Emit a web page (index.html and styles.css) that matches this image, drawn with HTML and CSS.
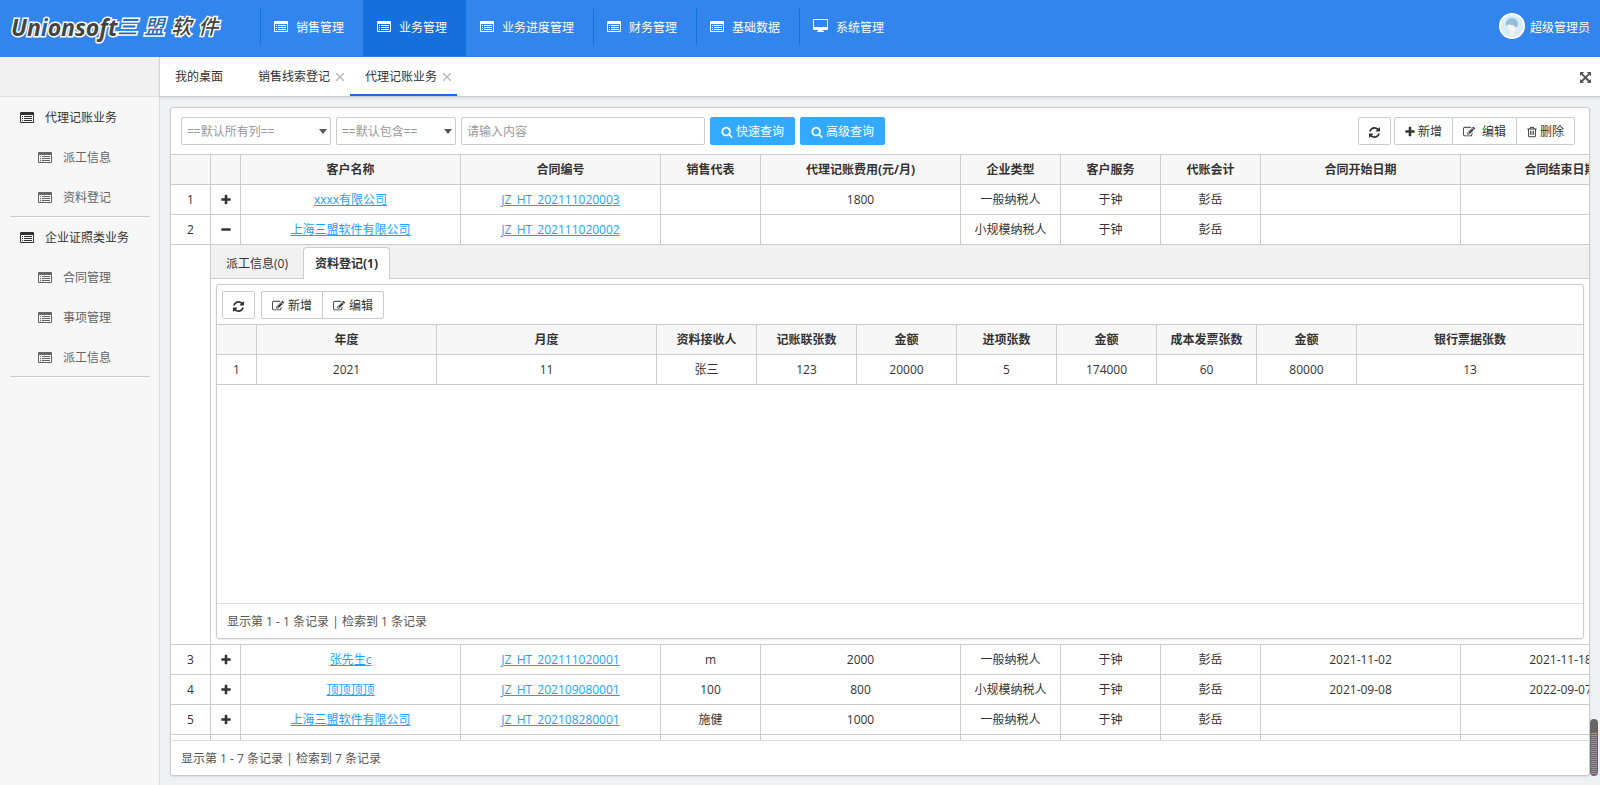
FILE: index.html
```html
<!DOCTYPE html>
<html lang="zh-CN">
<head>
    <meta charset="UTF-8">
    <meta name="viewport" content="width=device-width, initial-scale=1.0">
    <title>代理记账业务</title>
    <link rel="stylesheet" href="styles.css">
</head>
<body>
    <!-- icon sprite -->
    <svg class="sprite" aria-hidden="true">
        <symbol id="i-list" viewBox="0 0 14 12">
            <path fill-rule="evenodd" d="M1 1h12a1 1 0 0 1 1 1v9a1 1 0 0 1-1 1H1a1 1 0 0 1-1-1V2a1 1 0 0 1 1-1zM1 4v7h12V4z"/>
            <path d="M2 5h1v1H2zM4 5h8v1H4zM2 7h1v1H2zM4 7h8v1H4zM2 9h1v1H2zM4 9h8v1H4z"/>
        </symbol>
        <symbol id="i-desktop" viewBox="0 0 15 14">
            <path fill-rule="evenodd" d="M1 0h13a1 1 0 0 1 1 1v9a1 1 0 0 1-1 1h-4v1h1v1H4v-1h1v-1H1a1 1 0 0 1-1-1V1a1 1 0 0 1 1-1zM1 1v7h13V1z"/>
        </symbol>
        <symbol id="i-refresh" viewBox="0 0 1536 1792">
            <path d="M1511 1056q0 5-1 7-64 268-268 434.500t-478 166.500q-146 0-282.500-55t-243.500-157l-129 129q-19 19-45 19t-45-19-19-45v-448q0-26 19-45t45-19h448q26 0 45 19t19 45-19 45l-137 137q71 66 161 102t187 36q134 0 250-65t186-179q11-17 53-117 8-23 30-23h192q13 0 22.500 9.500t9.500 22.500zm25-800v448q0 26-19 45t-45 19h-448q-26 0-45-19t-19-45 19-45l138-138q-148-137-349-137-134 0-250 65t-186 179q-11 17-53 117-8 23-30 23h-199q-13 0-22.500-9.500t-9.500-22.500v-7q65-268 270-434.500t480-166.500q146 0 284 55.500t245 156.500l130-129q19-19 45-19t45 19 19 45z"/>
        </symbol>
        <symbol id="i-plus" viewBox="0 0 1408 1792">
            <path d="M1408 736v192q0 40-28 68t-68 28h-416v416q0 40-28 68t-68 28h-192q-40 0-68-28t-28-68v-416h-416q-40 0-68-28t-28-68v-192q0-40 28-68t68-28h416v-416q0-40 28-68t68-28h192q40 0 68 28t28 68v416h416q40 0 68 28t28 68z"/>
        </symbol>
        <symbol id="i-minus" viewBox="0 0 1408 1792">
            <path d="M1408 736v192q0 40-28 68t-68 28h-1216q-40 0-68-28t-28-68v-192q0-40 28-68t68-28h1216q40 0 68 28t28 68z"/>
        </symbol>
        <symbol id="i-search" viewBox="0 0 1664 1792">
            <path d="M1152 832q0-185-131.500-316.500t-316.500-131.500-316.500 131.500-131.500 316.500 131.500 316.500 316.500 131.500 316.500-131.500 131.500-316.500zm512 832q0 52-38 90t-90 38q-54 0-90-38l-343-342q-179 124-399 124-143 0-273.500-55.500t-225-150-150-225-55.500-273.500 55.500-273.500 150-225 225-150 273.500-55.500 273.500 55.500 225 150 150 225 55.500 273.500q0 220-124 399l343 343q37 37 37 90z"/>
        </symbol>
        <symbol id="i-edit" viewBox="0 0 1792 1792">
            <path d="M888 1184l116-116-152-152-116 116v56h96v96h56zm440-720q-16-16-33 1l-350 350q-17 17-1 33t33-1l350-350q17-17 1-33zm80 594v190q0 119-84.500 203.500t-203.500 84.500h-832q-119 0-203.500-84.500t-84.500-203.500v-832q0-119 84.500-203.500t203.500-84.500h832q63 0 117 25 15 7 18 23 3 17-9 29l-49 49q-14 14-32 8-23-6-45-6h-832q-66 0-113 47t-47 113v832q0 66 47 113t113 47h832q66 0 113-47t47-113v-126q0-13 9-22l64-64q15-15 35-7t20 29zm-96-738l288 288-672 672h-288v-288zm444 132l-92 92-288-288 92-92q28-28 68-28t68 28l152 152q28 28 28 68t-28 68z"/>
        </symbol>
        <symbol id="i-trash" viewBox="0 0 1408 1792">
            <path d="M512 736v576q0 14-9 23t-23 9h-64q-14 0-23-9t-9-23v-576q0-14 9-23t23-9h64q14 0 23 9t9 23zm256 0v576q0 14-9 23t-23 9h-64q-14 0-23-9t-9-23v-576q0-14 9-23t23-9h64q14 0 23 9t9 23zm256 0v576q0 14-9 23t-23 9h-64q-14 0-23-9t-9-23v-576q0-14 9-23t23-9h64q14 0 23 9t9 23zm128 724v-948h-896v948q0 22 7 40.500t14.500 27 10.500 8.500h832q3 0 10.500-8.500t14.500-27 7-40.500zm-672-1076h448l-48-117q-7-9-17-11h-317q-10 2-17 11zm928 32v64q0 14-9 23t-23 9h-96v948q0 83-47 143.500t-113 60.500h-832q-66 0-113-58.500t-47-141.500v-952h-96q-14 0-23-9t-9-23v-64q0-14 9-23t23-9h309l70-167q15-37 54-63t79-26h320q40 0 79 26t54 63l70 167h309q14 0 23 9t9 23z"/>
        </symbol>
        <symbol id="i-expand" viewBox="0 0 12 12">
            <path d="M0 0h4.500L3 1.500 6 4.500l3-3L7.500 0H12v4.500L10.500 3l-3 3 3 3L12 7.500V12H7.500L9 10.500l-3-3-3 3L4.500 12H0V7.500L1.500 9l3-3-3-3L0 4.500z"/>
        </symbol>
        <symbol id="i-close" viewBox="0 0 8 8">
            <path d="M0 0l8 8M8 0L0 8" fill="none" stroke="currentColor" stroke-width="1.500"/>
        </symbol>
    </svg>

    <header class="header">
        <a class="logo" href="#" aria-label="Unionsoft 三盟软件">
            <span class="logo-en">Un<i>i</i>onsoft</span>
            <span class="logo-cn"><b>三</b><b>盟</b><span>软</span><span>件</span></span>
        </a>
        <nav class="nav">
            <a href="#"><svg class="ic-list"><use href="#i-list"/></svg>销售管理</a>
            <a href="#" class="active"><svg class="ic-list"><use href="#i-list"/></svg>业务管理</a>
            <a href="#"><svg class="ic-list"><use href="#i-list"/></svg>业务进度管理</a>
            <a href="#"><svg class="ic-list"><use href="#i-list"/></svg>财务管理</a>
            <a href="#"><svg class="ic-list"><use href="#i-list"/></svg>基础数据</a>
            <a href="#"><svg class="ic-desktop"><use href="#i-desktop"/></svg>系统管理</a>
        </nav>
        <a class="user" href="#">
            <svg class="avatar" viewBox="0 0 26 26">
                <circle cx="13" cy="13" r="13" fill="#fff"/>
                <circle cx="13" cy="13" r="11" fill="#d9ecfa"/>
                <path d="M9 12c0-1 8-1 9 0 0 3-1 5-3 6v3c0 2-3 2-3 0v-3c-2-1-3-3-3-6z" fill="#fdf3ec"/>
                <path d="M7 13c-1-5 2-8 6-8 4 0 6 3 6 6 0 2-1 3-2 4-1-2-3-3-5-3-2-1-3 0-5 1z" fill="#94bfdb"/>
            </svg>
            <span>超级管理员</span>
        </a>
    </header>

    <div class="main">
        <aside class="sidebar">
            <div class="sidebar-top"></div>
            <nav class="menu">
                <div class="menu-group">
                    <a class="menu-title" href="#"><svg class="ic-list"><use href="#i-list"/></svg>代理记账业务</a>
                    <a href="#"><svg class="ic-list"><use href="#i-list"/></svg>派工信息</a>
                    <a href="#"><svg class="ic-list"><use href="#i-list"/></svg>资料登记</a>
                </div>
                <div class="menu-group">
                    <a class="menu-title" href="#"><svg class="ic-list"><use href="#i-list"/></svg>企业证照类业务</a>
                    <a href="#"><svg class="ic-list"><use href="#i-list"/></svg>合同管理</a>
                    <a href="#"><svg class="ic-list"><use href="#i-list"/></svg>事项管理</a>
                    <a href="#"><svg class="ic-list"><use href="#i-list"/></svg>派工信息</a>
                </div>
            </nav>
        </aside>

        <section class="content">
            <div class="tabs">
                <a class="tab tab-home" href="#">我的桌面</a>
                <a class="tab" href="#">销售线索登记<svg class="ic-close"><use href="#i-close"/></svg></a>
                <a class="tab active" href="#">代理记账业务<svg class="ic-close"><use href="#i-close"/></svg></a>
                <button class="full" type="button" aria-label="全屏"><svg class="ic-expand"><use href="#i-expand"/></svg></button>
            </div>

            <div class="panel">
                <form class="toolbar">
                    <span class="select select-col"><select aria-label="查询列"><option>==默认所有列==</option></select></span>
                    <span class="select select-op"><select aria-label="查询条件"><option>==默认包含==</option></select></span>
                    <input class="keyword" type="text" placeholder="请输入内容" aria-label="查询内容">
                    <button class="btn-primary" type="button"><svg class="ic-search"><use href="#i-search"/></svg>快速查询</button>
                    <button class="btn-primary" type="button"><svg class="ic-search"><use href="#i-search"/></svg>高级查询</button>
                    <div class="tools">
                        <button class="btn" type="button" aria-label="刷新"><svg class="ic-refresh"><use href="#i-refresh"/></svg></button>
                        <div class="btn-group">
                            <button class="btn" type="button"><svg class="ic-plus"><use href="#i-plus"/></svg>新增</button>
                            <button class="btn btn-wide" type="button"><svg class="ic-edit"><use href="#i-edit"/></svg>编辑</button>
                            <button class="btn" type="button"><svg class="ic-trash"><use href="#i-trash"/></svg>删除</button>
                        </div>
                    </div>
                </form>

                <div class="grid-wrap">
                    <table class="grid grid-main">
                        <colgroup>
                            <col class="w40"><col class="w30"><col class="w220"><col class="w200"><col class="w100"><col class="w200">
                            <col class="w100"><col class="w100"><col class="w100"><col class="w200"><col class="w200">
                        </colgroup>
                        <thead>
                            <tr>
                                <th></th><th></th><th>客户名称</th><th>合同编号</th><th>销售代表</th><th>代理记账费用(元/月)</th>
                                <th>企业类型</th><th>客户服务</th><th>代账会计</th><th>合同开始日期</th><th>合同结束日期</th>
                            </tr>
                        </thead>
                        <tbody>
                            <tr>
                                <td>1</td>
                                <td><button class="toggle" type="button" aria-label="展开"><svg class="ic-plus"><use href="#i-plus"/></svg></button></td>
                                <td><a href="#">xxxx有限公司</a></td>
                                <td><a href="#">JZ_HT_202111020003</a></td>
                                <td></td><td>1800</td><td>一般纳税人</td><td>于钟</td><td>彭岳</td><td></td><td></td>
                            </tr>
                            <tr>
                                <td>2</td>
                                <td><button class="toggle" type="button" aria-label="收起"><svg class="ic-plus"><use href="#i-minus"/></svg></button></td>
                                <td><a href="#">上海三盟软件有限公司</a></td>
                                <td><a href="#">JZ_HT_202111020002</a></td>
                                <td></td><td></td><td>小规模纳税人</td><td>于钟</td><td>彭岳</td><td></td><td></td>
                            </tr>
                            <tr class="detail-row">
                                <td></td>
                                <td colspan="10">
                                    <div class="detail">
                                        <div class="subtabs">
                                            <a href="#">派工信息(0)</a>
                                            <a class="active" href="#">资料登记(1)</a>
                                        </div>
                                        <div class="subpanel">
                                            <div class="subtools">
                                                <button class="btn" type="button" aria-label="刷新"><svg class="ic-refresh"><use href="#i-refresh"/></svg></button>
                                                <div class="btn-group">
                                                    <button class="btn" type="button"><svg class="ic-edit"><use href="#i-edit"/></svg>新增</button>
                                                    <button class="btn" type="button"><svg class="ic-edit"><use href="#i-edit"/></svg>编辑</button>
                                                </div>
                                            </div>
                                            <table class="grid grid-sub">
                                                <colgroup>
                                                    <col class="w40"><col class="w180"><col class="w220"><col class="w100"><col class="w100"><col class="w100">
                                                    <col class="w100"><col class="w100"><col class="w100"><col class="w100"><col>
                                                </colgroup>
                                                <thead>
                                                    <tr>
                                                        <th></th><th>年度</th><th>月度</th><th>资料接收人</th><th>记账联张数</th><th>金额</th>
                                                        <th>进项张数</th><th>金额</th><th>成本发票张数</th><th>金额</th><th>银行票据张数</th>
                                                    </tr>
                                                </thead>
                                                <tbody>
                                                    <tr>
                                                        <td>1</td><td>2021</td><td>11</td><td>张三</td><td>123</td><td>20000</td>
                                                        <td>5</td><td>174000</td><td>60</td><td>80000</td><td>13</td>
                                                    </tr>
                                                </tbody>
                                            </table>
                                            <div class="pager">显示第 1 - 1 条记录 | 检索到 1 条记录</div>
                                        </div>
                                    </div>
                                </td>
                            </tr>
                            <tr>
                                <td>3</td>
                                <td><button class="toggle" type="button" aria-label="展开"><svg class="ic-plus"><use href="#i-plus"/></svg></button></td>
                                <td><a href="#">张先生c</a></td>
                                <td><a href="#">JZ_HT_202111020001</a></td>
                                <td>m</td><td>2000</td><td>一般纳税人</td><td>于钟</td><td>彭岳</td><td>2021-11-02</td><td>2021-11-18</td>
                            </tr>
                            <tr>
                                <td>4</td>
                                <td><button class="toggle" type="button" aria-label="展开"><svg class="ic-plus"><use href="#i-plus"/></svg></button></td>
                                <td><a href="#">顶顶顶顶</a></td>
                                <td><a href="#">JZ_HT_202109080001</a></td>
                                <td>100</td><td>800</td><td>小规模纳税人</td><td>于钟</td><td>彭岳</td><td>2021-09-08</td><td>2022-09-07</td>
                            </tr>
                            <tr>
                                <td>5</td>
                                <td><button class="toggle" type="button" aria-label="展开"><svg class="ic-plus"><use href="#i-plus"/></svg></button></td>
                                <td><a href="#">上海三盟软件有限公司</a></td>
                                <td><a href="#">JZ_HT_202108280001</a></td>
                                <td>施健</td><td>1000</td><td>一般纳税人</td><td>于钟</td><td>彭岳</td><td></td><td></td>
                            </tr>
                            <tr>
                                <td></td><td></td><td></td><td></td><td></td><td></td><td></td><td></td><td></td><td></td><td></td>
                            </tr>
                        </tbody>
                    </table>
                </div>
                <div class="pager">显示第 1 - 7 条记录 | 检索到 7 条记录</div>
            </div>
        </section>
    </div>

    <div class="meter"><div class="meter-fill"></div></div>
</body>
</html>
```
FILE: styles.css
```css
* {
    box-sizing: border-box;
}
body {
    margin: 0;
    height: 100vh;
    display: flex;
    flex-direction: column;
    overflow: hidden;
    font: 12px/18px "Open Sans", "Noto Sans CJK SC", sans-serif;
    color: #333;
    background: #eef2f4;
}
a {
    color: inherit;
    text-decoration: none;
}
button, input, select {
    font: inherit;
    color: inherit;
}
svg {
    fill: currentColor;
    flex: none;
}
.sprite {
    position: absolute;
    width: 0;
    height: 0;
}
.ic-list { width: 14px; height: 12px; }
.ic-desktop { width: 15px; height: 14px; }
.ic-refresh { width: 11px; height: 13px; }
.ic-plus { width: 10px; height: 12px; }
.ic-search { width: 12px; height: 12px; }
.ic-edit { width: 12px; height: 12px; }
.ic-trash { width: 10px; height: 12px; }
.ic-expand { width: 11px; height: 11px; }
.ic-close { width: 8px; height: 8px; }

/* header */
.header {
    flex: none;
    height: 57px;
    display: flex;
    color: #fff;
    background: #3385ee;
}
.logo {
    width: 260px;
    padding: 0 0 2px 11px;
    height: 56px;
    display: flex;
    align-items: center;
    font-style: italic;
    color: #444;
    -webkit-text-stroke: 3px #fff;
    paint-order: stroke fill;
}
.logo-en {
    font-size: 23px;
    font-weight: 700;
}
.logo-en i {
    color: #1f5fae;
}
.logo-cn {
    display: flex;
    gap: 7px;
    font-size: 20px;
    font-weight: 500;
}
.logo-cn b {
    font-weight: 500;
    color: #1e6fb5;
}
.nav {
    display: flex;
    height: 56px;
}
.nav a {
    display: flex;
    align-items: center;
    gap: 8px;
    padding: 0 19px 0 13px;
    border-left: 1px solid transparent;
    border-image: linear-gradient(transparent 9px, #176edd 9px, #176edd 45px, transparent 45px) 0 0 0 1;
}
.nav svg {
    margin-bottom: 4px;
}
.nav a.active {
    background: #176edd;
    border-image: none;
    border-left-color: #176edd;
}
.nav a.active + a {
    border-image: none;
}
.user {
    display: flex;
    align-items: center;
    gap: 5px;
    height: 56px;
    margin-left: auto;
    padding-right: 10px;
}
.avatar {
    width: 26px;
    height: 26px;
    margin-bottom: 4px;
}

/* sidebar */
.main {
    flex: 1;
    min-height: 0;
    display: flex;
}
.sidebar {
    flex: none;
    width: 160px;
    border-right: 1px solid #ddd;
    background: #f7f7f7;
}
.sidebar-top {
    height: 40px;
    border-bottom: 1px solid #ddd;
    background: #f1f1f1;
}
.menu-group {
    margin: 0 9px 0 10px;
    border-bottom: 1px solid #ccc;
}
.menu-group a {
    display: flex;
    align-items: center;
    gap: 11px;
    height: 40px;
    padding: 2px 0 0 28px;
    color: #666;
}
.menu-group svg {
    margin-bottom: 2px;
}
.menu-group a:last-child {
    height: 39px;
    padding-top: 3px;
}
.menu-group .menu-title {
    padding-left: 10px;
    color: #333;
}

/* page tabs */
.content {
    flex: 1;
    min-width: 0;
    display: flex;
    flex-direction: column;
}
.tabs {
    flex: none;
    display: flex;
    height: 40px;
    border-bottom: 1px solid #ccc;
    background: #fff;
    box-shadow: 0 1px 3px rgba(0,0,0,0.1);
}
.tab {
    display: flex;
    align-items: center;
    gap: 6px;
    padding: 3px 6px 0 15px;
    border-bottom: 2px solid transparent;
}
.tab-home {
    padding-right: 20px;
}
.tab.active {
    border-bottom-color: #176edd;
}
.ic-close {
    color: #bbb;
}
.full {
    display: flex;
    align-items: center;
    margin-left: auto;
    padding: 2px 9px 0;
    border: 0;
    background: none;
    color: #555;
}

/* panel */
.panel {
    flex: 1;
    min-height: 0;
    display: flex;
    flex-direction: column;
    margin: 10px 10px 9px;
    border: 1px solid #ccc;
    border-radius: 3px;
    background: #fff;
    box-shadow: 0 1px 2px rgba(0,0,0,0.1);
}
.toolbar {
    flex: none;
    display: flex;
    align-items: center;
    gap: 5px;
    padding: 9px 14px 9px 10px;
    border-bottom: 1px solid #ccc;
}
.select {
    position: relative;
    display: flex;
}
.select::after {
    content: "";
    position: absolute;
    right: 4px;
    top: 12px;
    border: 4px solid transparent;
    border-top: 5px solid #555;
    border-bottom: 0;
    pointer-events: none;
}
.select-col { width: 150px; }
.select-op { width: 120px; }
.select select, .keyword {
    width: 100%;
    height: 28px;
    padding: 1px 5px 0;
    border: 1px solid #ccc;
    border-radius: 2px;
    background: #fff;
    color: #999;
    appearance: none;
}
.keyword {
    width: 244px;
}
.keyword::placeholder {
    color: #999;
}
.btn, .btn-primary {
    display: flex;
    align-items: center;
    justify-content: center;
    gap: 3px;
    height: 28px;
    padding: 2px 10px 0;
    border: 1px solid #ccc;
    border-radius: 2px;
    background: #fff;
}
.btn-primary {
    border-color: #33aaff;
    background: #33aaff;
    color: #fff;
}
.btn-wide {
    gap: 7px;
}
.tools {
    display: flex;
    gap: 3px;
    margin-left: auto;
}
.btn-group {
    display: flex;
}
.btn-group .btn + .btn {
    margin-left: -1px;
    border-radius: 0 2px 2px 0;
}

/* tables */
.grid-wrap {
    flex: 1;
    min-height: 0;
    overflow: hidden;
    container-type: inline-size;
}
.grid {
    table-layout: fixed;
    border-collapse: separate;
    border-spacing: 0;
}
.grid-main {
    width: 1490px;
}
.grid-sub {
    width: 100%;
}
.w30 { width: 30px; }
.w40 { width: 40px; }
.w100 { width: 100px; }
.w180 { width: 180px; }
.w200 { width: 200px; }
.w220 { width: 220px; }
.grid th, .grid td {
    height: 30px;
    padding: 0;
    border-right: 1px solid #ccc;
    border-bottom: 1px solid #ccc;
    text-align: center;
    white-space: nowrap;
    overflow: hidden;
}
.grid th {
    background: #f7f7f7;
    font-weight: 700;
}
.grid-sub th:last-child, .grid-sub td:last-child {
    border-right: 0;
}
.grid td a {
    color: #1aa3ff;
    text-decoration: underline;
}
.toggle {
    display: flex;
    justify-content: center;
    width: 100%;
    padding: 0;
    border: 0;
    background: none;
}

/* expanded row */
.detail {
    width: calc(100cqw - 40px);
    height: 399px;
    display: flex;
    flex-direction: column;
    text-align: left;
}
.subtabs {
    flex: none;
    display: flex;
    align-items: flex-end;
    height: 34px;
    border-bottom: 1px solid #ccc;
    background: #f1f1f1;
}
.grid .subtabs a {
    height: 31px;
    padding: 8px 15px 0;
    color: #333;
    text-decoration: none;
}
.grid .subtabs .active {
    height: 32px;
    margin-bottom: -1px;
    padding: 7px 11px 0;
    border: 1px solid #ccc;
    border-bottom: 0;
    border-radius: 4px 4px 0 0;
    background: #fff;
    font-weight: 700;
}
.subpanel {
    flex: 1;
    display: flex;
    flex-direction: column;
    margin: 5px;
    border: 1px solid #ccc;
    border-radius: 3px;
    box-shadow: 0 1px 2px rgba(0,0,0,0.1);
}
.subtools {
    display: flex;
    gap: 6px;
    padding: 6px 5px 5px;
    border-bottom: 1px solid #ccc;
}
.subtools .btn {
    gap: 4px;
}
.pager {
    flex: none;
    height: 35px;
    padding: 0 10px;
    border-top: 1px solid #ddd;
    line-height: 36px;
    color: #555;
}
.subpanel .pager {
    margin-top: auto;
}

/* floating meter in the corner */
.meter {
    position: fixed;
    right: 2px;
    bottom: 9px;
    width: 8px;
    height: 57px;
    padding: 14px 1px 2px;
    border-radius: 4px;
    background: #666;
}
.meter-fill {
    height: 100%;
    background: repeating-linear-gradient(#3fcf77 0, #3fcf77 1px, #666 1px, #666 2px);
}
```
